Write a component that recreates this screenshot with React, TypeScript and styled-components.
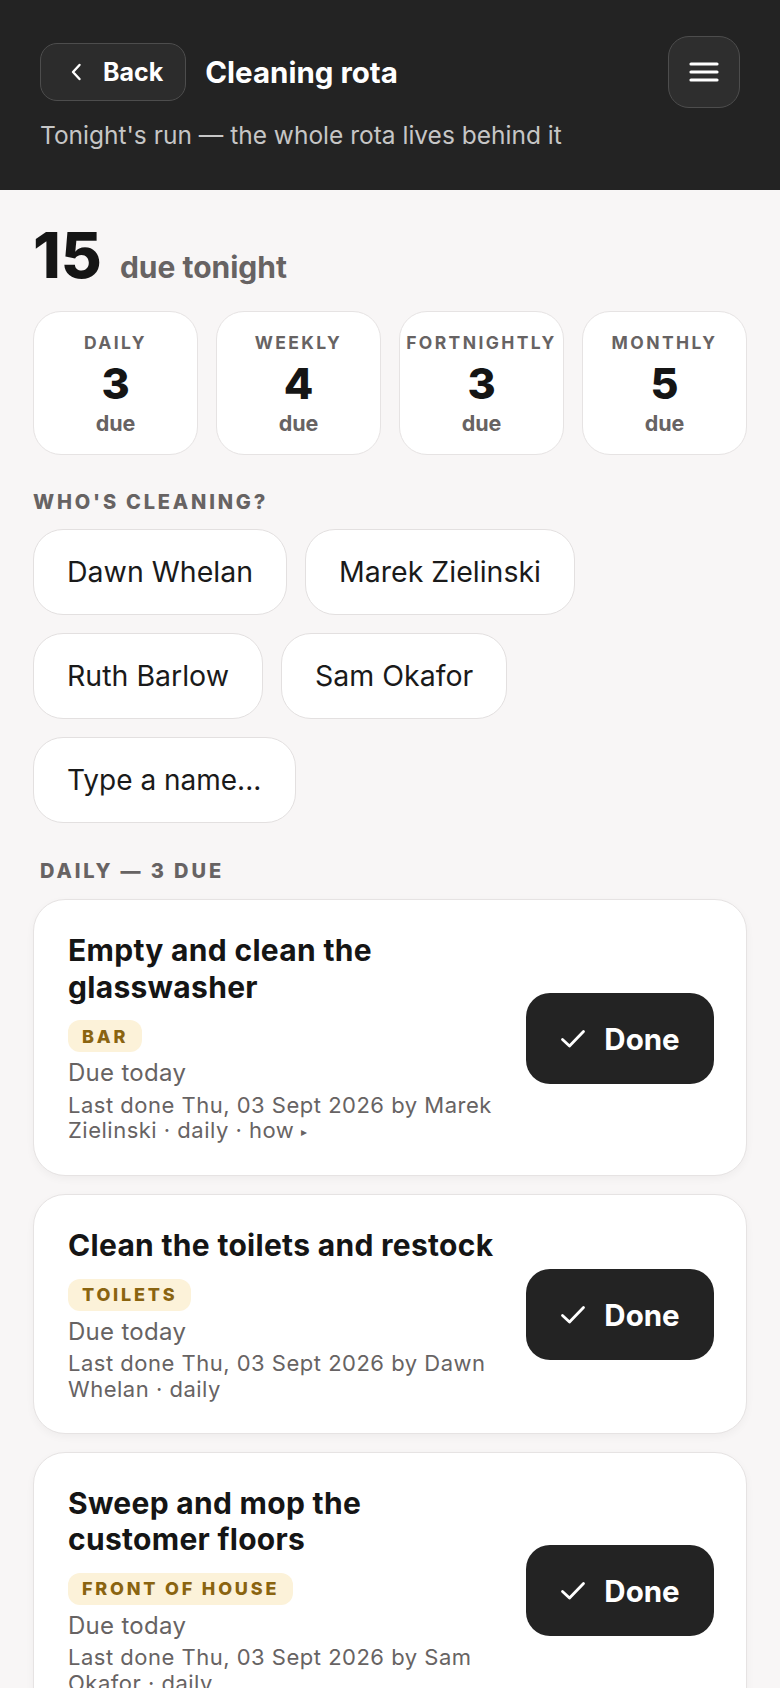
import React from 'react'
import styled, { createGlobalStyle } from 'styled-components'

const GlobalStyle = createGlobalStyle`
  * { box-sizing: border-box; }
  html, body { margin: 0; padding: 0; background: #f8f6f6; }
  body {
    font-family: Inter, "Liberation Sans", "Noto Sans", sans-serif;
    color: #1a1a1a;
    -webkit-font-smoothing: antialiased;
  }
  button, input { font-family: inherit; }
`

const stats = [
  { label: 'Daily', count: 3 },
  { label: 'Weekly', count: 4 },
  { label: 'Fortnightly', count: 3 },
  { label: 'Monthly', count: 5 },
]

const people = ['Dawn Whelan', 'Marek Zielinski', 'Ruth Barlow', 'Sam Okafor']

type Task = { title: string; area: string; last: string; how?: boolean }

const tasks: Task[] = [
  {
    title: 'Empty and clean the glasswasher',
    area: 'Bar',
    last: 'Last done Thu, 03 Sept 2026 by Marek Zielinski · daily',
    how: true,
  },
  {
    title: 'Clean the toilets and restock',
    area: 'Toilets',
    last: 'Last done Thu, 03 Sept 2026 by Dawn Whelan · daily',
  },
  {
    title: 'Sweep and mop the customer floors',
    area: 'Front of house',
    last: 'Last done Thu, 03 Sept 2026 by Sam Okafor · daily',
  },
]

const ChevronIcon = () => (
  <svg width="14" height="20" viewBox="0 0 14 20" fill="none">
    <path d="M10.5 3 L4 10 L10.5 17" stroke="#fff" strokeWidth="2.4" strokeLinecap="round" strokeLinejoin="round" />
  </svg>
)

const MenuIcon = () => (
  <svg width="30" height="22" viewBox="0 0 30 22" fill="none">
    <path d="M2 3 H28 M2 11 H28 M2 19 H28" stroke="#fff" strokeWidth="3.2" strokeLinecap="round" />
  </svg>
)

const CheckIcon = () => (
  <svg width="26" height="20" viewBox="0 0 26 20" fill="none">
    <path d="M2.5 10.5 L9.5 17 L23.5 2.5" stroke="#fff" strokeWidth="2.8" strokeLinecap="round" strokeLinejoin="round" />
  </svg>
)

const TaskCard = ({ task }: { task: Task }) => (
  <ScTaskCard>
    <TaskInfo>
      <TaskTitle>{task.title}</TaskTitle>
      <AreaTag>{task.area}</AreaTag>
      <DueText>Due today</DueText>
      <LastDone>
        {task.last}
        {task.how && <> · how <Caret>▸</Caret></>}
      </LastDone>
    </TaskInfo>
    <DoneButton>
      <CheckIcon />
      Done
    </DoneButton>
  </ScTaskCard>
)

const App = () => {
  return (
    <>
      <GlobalStyle />
      <Header>
        <HeaderRow>
          <HeaderLeft>
            <BackButton>
              <ChevronIcon />
              Back
            </BackButton>
            <Title>Cleaning rota</Title>
          </HeaderLeft>
          <MenuButton aria-label="Menu">
            <MenuIcon />
          </MenuButton>
        </HeaderRow>
        <Subtitle>Tonight's run — the whole rota lives behind it</Subtitle>
      </Header>

      <Main>
        <Summary>
          <BigCount>15</BigCount>
          <SummaryLabel>due tonight</SummaryLabel>
        </Summary>

        <StatGrid>
          {stats.map((st) => (
            <StatCard key={st.label}>
              <StatLabel>{st.label}</StatLabel>
              <StatCount>{st.count}</StatCount>
              <StatDue>due</StatDue>
            </StatCard>
          ))}
        </StatGrid>

        <SectionLabel>Who's cleaning?</SectionLabel>
        <ChipRow>
          {people.map((p) => (
            <Chip key={p}>{p}</Chip>
          ))}
          <NameInput placeholder="Type a name..." />
        </ChipRow>

        <GroupHeading>Daily — 3 due</GroupHeading>
        <TaskList>
          {tasks.map((t) => (
            <TaskCard key={t.title} task={t} />
          ))}
        </TaskList>
      </Main>
    </>
  )
}

const Header = styled.header`
  background: #232323;
  padding: 36px 40px 41px 40px;
`

const HeaderRow = styled.div`
  display: flex;
  align-items: center;
  justify-content: space-between;
  height: 72px;
`

const HeaderLeft = styled.div`
  display: flex;
  align-items: center;
  gap: 19px;
`

const BackButton = styled.button`
  display: flex;
  align-items: center;
  gap: 20px;
  height: 58px;
  padding: 0 22px 0 28px;
  border-radius: 17px;
  border: 1.5px solid #4d4d4d;
  background: #2c2c2c;
  color: #fff;
  font-size: 25px;
  font-weight: 700;
`

const Title = styled.h1`
  margin: 0;
  color: #fff;
  font-size: 29.5px;
  font-weight: 700;
`

const MenuButton = styled.button`
  display: flex;
  align-items: center;
  justify-content: center;
  width: 72px;
  height: 72px;
  border-radius: 21px;
  border: 1.5px solid #4d4d4d;
  background: #2e2e2e;
  padding: 0;
`

const Subtitle = styled.p`
  margin: 13px 0 0;
  color: #c6c6c6;
  font-size: 24.5px;
  line-height: 28px;
`

const Main = styled.main`
  padding: 35px 33px 40px;
`

const Summary = styled.div`
  display: flex;
  align-items: baseline;
  gap: 18px;
`

const BigCount = styled.span`
  font-size: 63px;
  line-height: 60px;
  font-weight: 800;
  color: #151515;
`

const SummaryLabel = styled.span`
  font-size: 30px;
  line-height: 1;
  font-weight: 700;
  color: #676363;
`

const StatGrid = styled.div`
  display: grid;
  grid-template-columns: repeat(4, 1fr);
  gap: 18px;
  margin-top: 26px;
`

const StatCard = styled.div`
  display: flex;
  flex-direction: column;
  align-items: center;
  padding: 20px 0 18px;
  background: #fff;
  border: 1.5px solid #e6e3e3;
  border-radius: 28px;
`

const StatLabel = styled.div`
  font-size: 17.5px;
  line-height: 22px;
  font-weight: 700;
  letter-spacing: 2.4px;
  text-transform: uppercase;
  color: #676363;
`

const StatCount = styled.div`
  margin-top: 6px;
  font-size: 43px;
  line-height: 46px;
  font-weight: 800;
  color: #151515;
`

const StatDue = styled.div`
  margin-top: 4px;
  font-size: 21.5px;
  line-height: 26px;
  font-weight: 700;
  color: #676363;
`

const SectionLabel = styled.h2`
  margin: 35px 0 0;
  font-size: 20px;
  line-height: 24px;
  font-weight: 800;
  letter-spacing: 2.8px;
  text-transform: uppercase;
  color: #676363;
`

const ChipRow = styled.div`
  display: flex;
  flex-wrap: wrap;
  gap: 18px;
  margin-top: 15px;
`

const Chip = styled.button`
  padding: 25px 33px;
  background: #fff;
  border: 1.5px solid #e3e0e0;
  border-radius: 30px;
  font-size: 28.5px;
  line-height: 34px;
  font-weight: 400;
  color: #1a1a1a;
`

const NameInput = styled.input`
  width: 263px;
  padding: 25px 26px 25px 33px;
  background: #fff;
  border: 1.5px solid #e3e0e0;
  border-radius: 30px;
  font-size: 28px;
  line-height: 34px;
  color: #1a1a1a;
  outline: none;

  &::placeholder { color: #1a1a1a; opacity: 1; }
`

const GroupHeading = styled.h3`
  margin: 35px 0 0;
  padding-left: 7px;
  font-size: 20px;
  line-height: 26px;
  font-weight: 800;
  letter-spacing: 2.9px;
  text-transform: uppercase;
  color: #676363;
`

const TaskList = styled.div`
  display: flex;
  flex-direction: column;
  gap: 18px;
  margin-top: 15px;
`

const ScTaskCard = styled.div`
  display: flex;
  align-items: center;
  gap: 22px;
  padding: 32px 32px 30px 34px;
  background: #fff;
  border: 1.5px solid #e6e3e3;
  border-radius: 32px;
  box-shadow: 0 3px 8px rgba(0, 0, 0, 0.04);
`

const TaskInfo = styled.div`
  flex: 1;
  min-width: 0;
  display: flex;
  flex-direction: column;
  align-items: flex-start;
`

const TaskTitle = styled.div`
  font-size: 30px;
  line-height: 36.5px;
  font-weight: 700;
  letter-spacing: 0.3px;
  color: #151515;
`

const AreaTag = styled.span`
  display: inline-flex;
  align-items: center;
  height: 32px;
  margin-top: 15px;
  padding: 0 14px;
  border-radius: 12px;
  background: #fcf2d9;
  color: #8a6410;
  font-size: 18px;
  font-weight: 800;
  letter-spacing: 2.8px;
  text-transform: uppercase;
`

const DueText = styled.div`
  margin-top: 6px;
  font-size: 24px;
  line-height: 30px;
  letter-spacing: 0.3px;
  color: #676363;
`

const LastDone = styled.div`
  margin-top: 4.5px;
  font-size: 22px;
  line-height: 25.8px;
  letter-spacing: 0.5px;
  color: #676363;
`

const Caret = styled.span`
  font-size: 12px;
  vertical-align: 2px;
`

const DoneButton = styled.button`
  flex: none;
  display: flex;
  align-items: center;
  justify-content: center;
  gap: 18px;
  width: 188px;
  height: 91px;
  border: none;
  border-radius: 24px;
  background: #232323;
  color: #fff;
  font-size: 29.5px;
  font-weight: 700;
`

export default App
